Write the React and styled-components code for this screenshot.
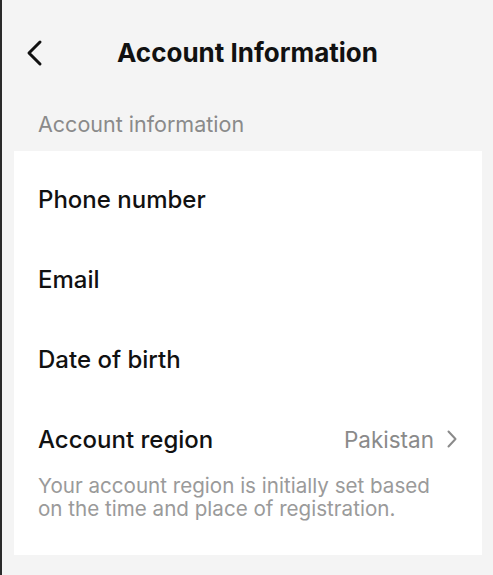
import React from 'react';
import styled, { createGlobalStyle } from 'styled-components';

const GlobalStyle = createGlobalStyle`
  html, body {
    margin: 0;
    padding: 0;
    background: #f4f4f4;
  }
  body {
    font-family: Inter, "Noto Sans", sans-serif;
  }
`;

const Page = styled.div`
  width: 493px;
  height: 575px;
  box-sizing: border-box;
  border-left: 2px solid #2a2a2a;
  background: #f4f4f4;
  overflow: hidden;
`;

const Header = styled.header`
  position: relative;
  height: 104px;
  display: flex;
  align-items: center;
  justify-content: center;
`;

const BackButton = styled.button`
  position: absolute;
  left: 20px;
  top: 38px;
  width: 24px;
  height: 30px;
  padding: 0;
  border: none;
  background: none;
  display: flex;
  align-items: center;
  justify-content: center;
`;

const Title = styled.h1`
  margin: 0;
  font-size: 26px;
  font-weight: 700;
  color: #111;
`;

const SectionLabel = styled.div`
  padding: 7px 0 0 36px;
  height: 38px;
  box-sizing: border-box;
  font-size: 21.5px;
  color: #8a8a8a;
`;

const Card = styled.section`
  margin: 9px 11px 0 12px;
  background: #fff;
  padding: 8px 0 35px;
`;

const Row = styled.div`
  display: flex;
  align-items: center;
  justify-content: space-between;
  height: 80px;
  padding: 0 24px;
`;

const RowLabel = styled.span`
  font-size: 24px;
  font-weight: 500;
  color: #111;
`;

const RowValue = styled.span`
  display: flex;
  align-items: center;
  gap: 12px;
  font-size: 22.5px;
  color: #8a8a8a;
`;

const Note = styled.p`
  margin: -5px 0 0 0;
  padding: 0 36px 0 24px;
  font-size: 20.6px;
  line-height: 23px;
  color: #9a9a9a;
`;

const Chevron = ({ color = '#8a8a8a' }) => (
  <svg width="12" height="20" viewBox="0 0 12 20" fill="none">
    <path d="M2.5 2.5l7 7.5-7 7.5" stroke={color} strokeWidth="2" strokeLinecap="round" strokeLinejoin="round" />
  </svg>
);

const App = () => {
  return (
    <Page>
      <GlobalStyle />
      <Header>
        <BackButton aria-label="Back">
          <svg width="18" height="28" viewBox="0 0 18 28" fill="none">
            <path d="M15 3L4 14l11 11" stroke="#111" strokeWidth="3" strokeLinecap="round" strokeLinejoin="round" />
          </svg>
        </BackButton>
        <Title>Account Information</Title>
      </Header>
      <SectionLabel>Account information</SectionLabel>
      <Card>
        <Row><RowLabel>Phone number</RowLabel></Row>
        <Row><RowLabel>Email</RowLabel></Row>
        <Row><RowLabel>Date of birth</RowLabel></Row>
        <Row>
          <RowLabel>Account region</RowLabel>
          <RowValue>Pakistan <Chevron /></RowValue>
        </Row>
        <Note>Your account region is initially set based on the time and place of registration.</Note>
      </Card>
    </Page>
  );
};

export default App;
